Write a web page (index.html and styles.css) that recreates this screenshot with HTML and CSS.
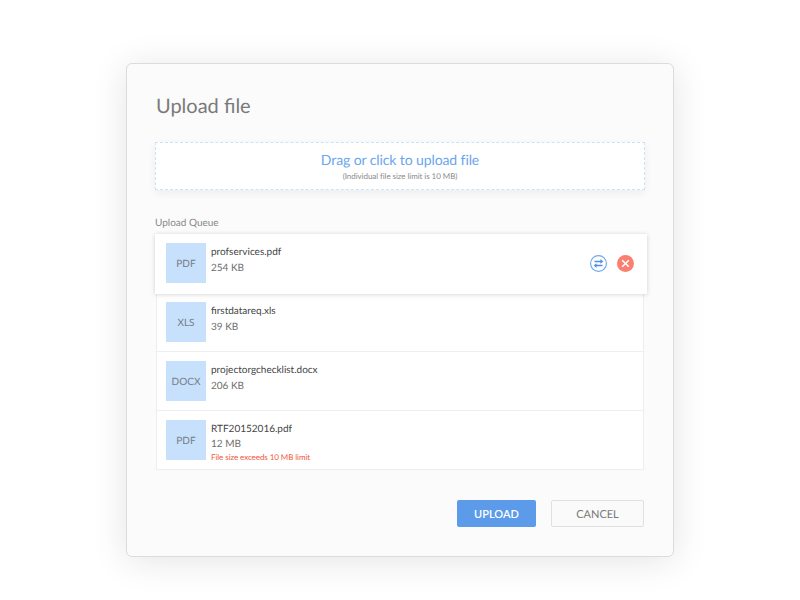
FILE: index.html
```html
<!DOCTYPE html>
<html lang="en">
<head>
<meta charset="utf-8">
<title>Upload file</title>
<link rel="stylesheet" href="styles.css">
</head>
<body>
<main class="dialog">
  <h1 class="title">Upload file</h1>
  <div class="dropzone">
    <div class="drop-main">Drag or click to upload file</div>
    <div class="drop-note">(Individual file size limit is 10 MB)</div>
  </div>
  <div class="queue-label">Upload Queue</div>
  <ul class="queue">
    <li class="row row-active">
      <div class="thumb">PDF</div>
      <div class="info">
        <div class="name">profservices.pdf</div>
        <div class="size">254 KB</div>
      </div>
      <div class="actions">
        <svg class="icon" viewBox="0 0 17 17" width="17" height="17" aria-hidden="true">
          <circle cx="8.5" cy="8.5" r="7.9" fill="#fff" stroke="#6ea8ee" stroke-width="1.1"/>
          <path d="M4.5 6.4H11M12.5 10.6H6" fill="none" stroke="#4f90e4" stroke-width="1.5"/>
          <path d="M10.4 4l2.9 2.4-2.9 2.4zM6.6 8.2l-2.9 2.4 2.9 2.4z" fill="#4f90e4"/>
        </svg>
        <svg class="icon" viewBox="0 0 17 17" width="17" height="17" aria-hidden="true">
          <circle cx="8.5" cy="8.5" r="8.5" fill="#fb7f71"/>
          <path d="M5.2 5.2l6.6 6.6M11.8 5.2l-6.6 6.6" fill="none" stroke="#fff" stroke-width="1.6"/>
        </svg>
      </div>
    </li>
    <li class="row">
      <div class="thumb">XLS</div>
      <div class="info">
        <div class="name">firstdatareq.xls</div>
        <div class="size">39 KB</div>
      </div>
    </li>
    <li class="row">
      <div class="thumb">DOCX</div>
      <div class="info">
        <div class="name">projectorgchecklist.docx</div>
        <div class="size">206 KB</div>
      </div>
    </li>
    <li class="row row-error">
      <div class="thumb">PDF</div>
      <div class="info">
        <div class="name">RTF20152016.pdf</div>
        <div class="size">12 MB</div>
        <div class="error">File size exceeds 10 MB limit</div>
      </div>
    </li>
  </ul>
  <div class="buttons">
    <button class="btn btn-primary" type="button">UPLOAD</button>
    <button class="btn btn-secondary" type="button">CANCEL</button>
  </div>
</main>
</body>
</html>
```
FILE: styles.css
```css
* { box-sizing: border-box; }
html, body { margin: 0; padding: 0; }
body {
  width: 800px;
  height: 600px;
  background: #fff;
  font-family: Lato, "Liberation Sans", sans-serif;
  text-rendering: geometricPrecision;
  overflow: hidden;
  padding: 63px 126px 0;
}
.dialog {
  width: 548px;
  height: 494px;
  background: #fbfbfb;
  border: 1px solid #dcdcdc;
  border-radius: 6px;
  box-shadow: 0 4px 36px rgba(0, 0, 0, 0.11);
  padding: 29px 29px 0;
}
.title {
  margin: 0;
  font-size: 20px;
  line-height: 26px;
  font-weight: 400;
  color: #7a7a7a;
}
.dropzone {
  margin: 23px -1px 0;
  height: 48px;
  background: #fff;
  border: 1px dashed #c9e3fc;
  box-shadow: 0 3px 8px rgba(0, 0, 0, 0.06);
  text-align: center;
  padding-top: 8px;
}
.drop-main { font-size: 14px; line-height: 17px; letter-spacing: -0.1px; color: #6aa5ee; }
.drop-note { font-size: 8px; line-height: 12px; margin-top: 2px; letter-spacing: -0.06px; color: #8a8a8a; }
.queue-label {
  margin: 27px -1px 0;
  font-size: 10px;
  line-height: 13px;
  color: #888;
}
.queue {
  list-style: none;
  margin: 4px 0 0;
  padding: 0;
}
.row {
  display: flex;
  gap: 5px;
  height: 59px;
  padding: 9px 9px 0;
  background: #fff;
  border: 1px solid #eeeeee;
  border-top: 0;
}
.row-active {
  position: relative;
  height: 60px;
  margin: 0 -3px -1px -1px;
  padding: 9px 13px 0 11px;
  border: 0;
  box-shadow: 0 0 4px rgba(0, 0, 0, 0.08), 0 1px 5px rgba(0, 0, 0, 0.1);
}
.thumb {
  width: 40px;
  height: 40px;
  flex: none;
  background: #c7e1fd;
  color: #747c88;
  font-size: 10px;
  line-height: 43px;
  text-align: center;
}
.info { flex: 1; padding-top: 3px; }
.name { font-size: 10px; line-height: 13px; color: #444; }
.size { font-size: 10px; line-height: 13px; margin-top: 3px; color: #6d6d6d; }
.row-error .size { margin-top: 2px; }
.error { font-size: 8px; line-height: 11px; margin-top: 1px; letter-spacing: -0.07px; color: #f0583c; }
.actions {
  display: flex;
  align-items: center;
  gap: 10px;
  height: 41px;
}
.icon { display: block; }
.buttons {
  display: flex;
  justify-content: flex-end;
  gap: 15px;
  margin-top: 30px;
}
.btn {
  height: 27px;
  font-family: inherit;
  text-rendering: inherit;
  font-size: 11px;
  padding: 2px 0 0;
  border-radius: 2px;
}
.btn-primary {
  width: 79px;
  background: #5b9bea;
  border: 0;
  color: #fff;
  font-weight: 600;
}
.btn-secondary {
  width: 93px;
  background: #fafafa;
  border: 1px solid #e0e0e0;
  color: #777;
}
```
